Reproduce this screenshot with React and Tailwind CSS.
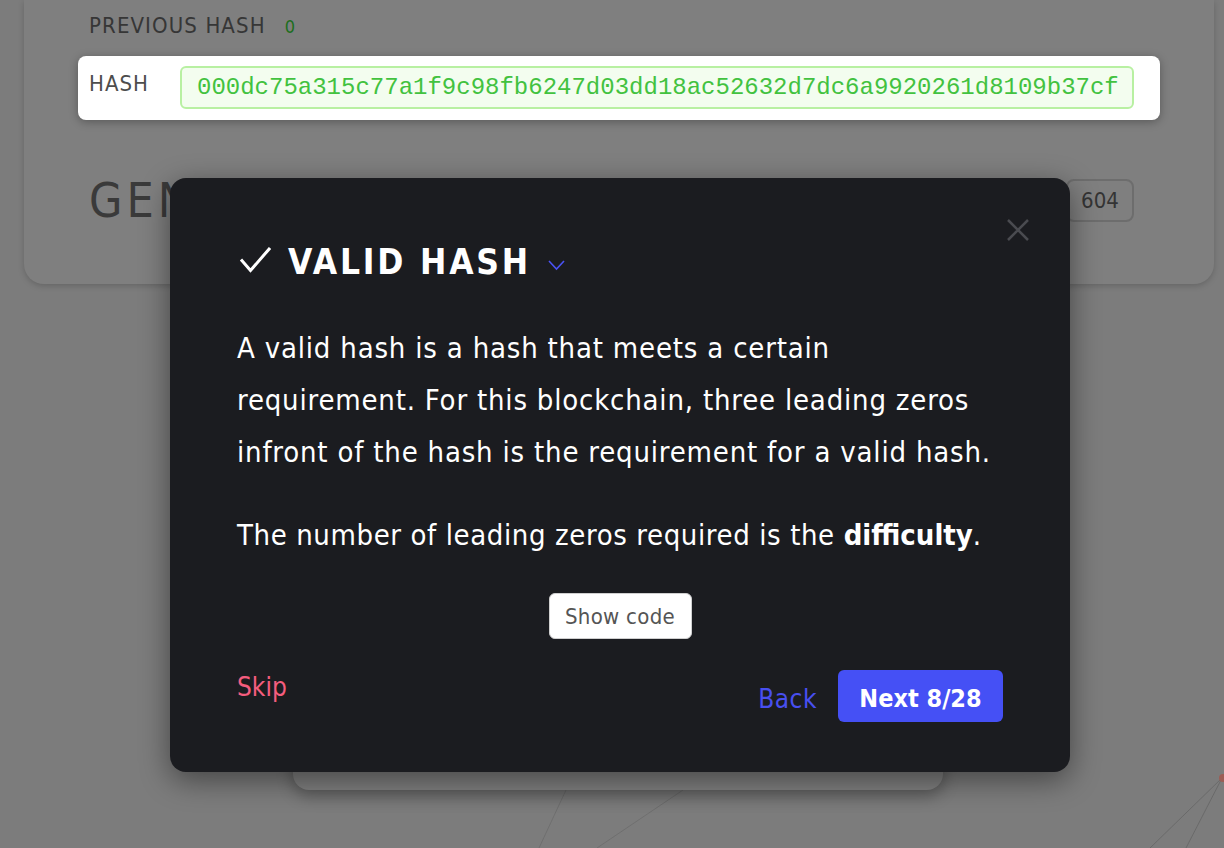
import React from "react";

export default function App() {
  return (
    <div className="relative h-[848px] w-full overflow-hidden bg-[#7c7c7c] font-['DejaVu_Sans_Condensed',sans-serif]">
      {/* background canvas lines */}
      <svg className="absolute left-0 top-0 h-[848px] w-[1224px]" viewBox="0 0 1224 848">
        <line x1="566" y1="790" x2="539" y2="848" stroke="#6f6f6f" strokeWidth="1" />
        <line x1="683" y1="790" x2="597" y2="848" stroke="#6f6f6f" strokeWidth="1" />
        <line x1="1222" y1="778" x2="1150" y2="848" stroke="#6a6a6a" strokeWidth="1" />
        <line x1="1222" y1="778" x2="1186" y2="848" stroke="#6a6a6a" strokeWidth="1" />
        <circle cx="1223" cy="778" r="4" fill="#9c5d55" />
      </svg>

      {/* block card */}
      <div className="relative ml-[24px] w-[1190px] rounded-b-[20px] bg-[#7f7f7f] px-[54px] pb-[62px] pt-[6px] shadow-[0_2px_6px_rgba(0,0,0,0.18)]">
        <div className="flex h-[40px] items-baseline gap-[19px] px-[11px] pt-[6px]">
          <span className="text-[22px] leading-[28px] tracking-[1.1px] text-[#363636]">PREVIOUS HASH</span>
          <span className="text-[18px] leading-[28px] text-[#1d6e1d]">0</span>
        </div>
        <div className="mt-[10px] flex items-start rounded-[8px] bg-white pb-[11px] pl-[11px] pr-[26px] pt-[10px] shadow-[0_2px_10px_rgba(0,0,0,0.3)]">
          <span className="mt-[4px] w-[91px] text-[22px] leading-[28px] tracking-[1px] text-[#4d4d4d]">HASH</span>
          <div className="flex h-[43px] flex-1 items-center rounded-[6px] border-2 border-[#b8f0a2] bg-[#f3fdef] pl-[15px] font-['Liberation_Mono',monospace] text-[24px] text-[#42c23f]">
            000dc75a315c77a1f9c98fb6247d03dd18ac52632d7dc6a9920261d8109b37cf
          </div>
        </div>
        <div className="mt-[58px] flex h-[44px] items-center justify-between pl-[11px] pr-[26px]">
          <span className="text-[48px] leading-none tracking-[4px] text-[#3a3a3a]">GENESIS BLOCK</span>
          <span className="flex h-[43px] w-[68px] items-center justify-center rounded-[8px] border-2 border-[#6d6d6d] text-[22px] text-[#343434]">604</span>
        </div>
      </div>

      {/* next card (behind the tour) */}
      <div className="relative ml-[293px] mt-[16px] h-[490px] w-[650px] rounded-[16px] bg-[#7f7f7f] shadow-[0_6px_16px_rgba(0,0,0,0.3)]" />

      {/* tour dialog */}
      <div className="absolute left-[170px] top-[178px] flex h-[594px] w-[900px] flex-col rounded-[16px] bg-[#1b1c20] px-[67px] pt-[67px] shadow-[0_8px_30px_rgba(0,0,0,0.45)]">
        <svg className="absolute right-[40px] top-[40px]" width="24" height="24" viewBox="0 0 24 24">
          <path d="M2 2 L22 22 M22 2 L2 22" stroke="#4a4b50" strokeWidth="2.5" fill="none" />
        </svg>

        <div className="flex items-start">
          <svg className="mt-[1px] shrink-0" width="34" height="27" viewBox="0 0 34 27">
            <path d="M4 13.5 L13.5 24.5 L33 2" stroke="#ffffff" strokeWidth="3" fill="none" />
          </svg>
          <span className="ml-[17px] text-[35px] font-bold leading-[35px] tracking-[2.8px] text-white">VALID HASH</span>
          <svg className="ml-[17px] mt-[14px] shrink-0" width="17" height="12" viewBox="0 0 17 12">
            <path d="M1 2 L8.5 10 L16 2" stroke="#4a52f5" strokeWidth="1.6" fill="none" />
          </svg>
        </div>

        <p className="mt-[42px] text-[29px] leading-[52px] tracking-[0.8px] text-white">
          A valid hash is a hash that meets a certain<br />
          requirement. For this blockchain, three leading zeros<br />
          infront of the hash is the requirement for a valid hash.
        </p>
        <p className="mt-[31px] text-[29px] leading-[52px] tracking-[0.6px] text-white">
          The number of leading zeros required is the <span className="font-bold tracking-[0px]">difficulty</span>.
        </p>

        <div className="mt-[32px] flex justify-center">
          <button className="flex h-[46px] w-[143px] items-center justify-center rounded-[6px] border border-[#cfcfcf] bg-white text-[22px] tracking-[0.3px] text-[#555555]">
            Show code
          </button>
        </div>

        <div className="mt-[31px] flex items-start justify-between">
          <span className="text-[26px] leading-[34px] text-[#f45d7e]">Skip</span>
          <div className="flex items-start gap-[21px]">
            <span className="mt-[12px] text-[26px] leading-[34px] tracking-[0.5px] text-[#484ff0]">Back</span>
            <button className="flex h-[52px] w-[165px] items-center justify-center rounded-[6px] bg-[#4550f5] pt-[5px] text-[25px] font-bold leading-[34px] text-white">
              Next 8/28
            </button>
          </div>
        </div>
      </div>
    </div>
  );
}
